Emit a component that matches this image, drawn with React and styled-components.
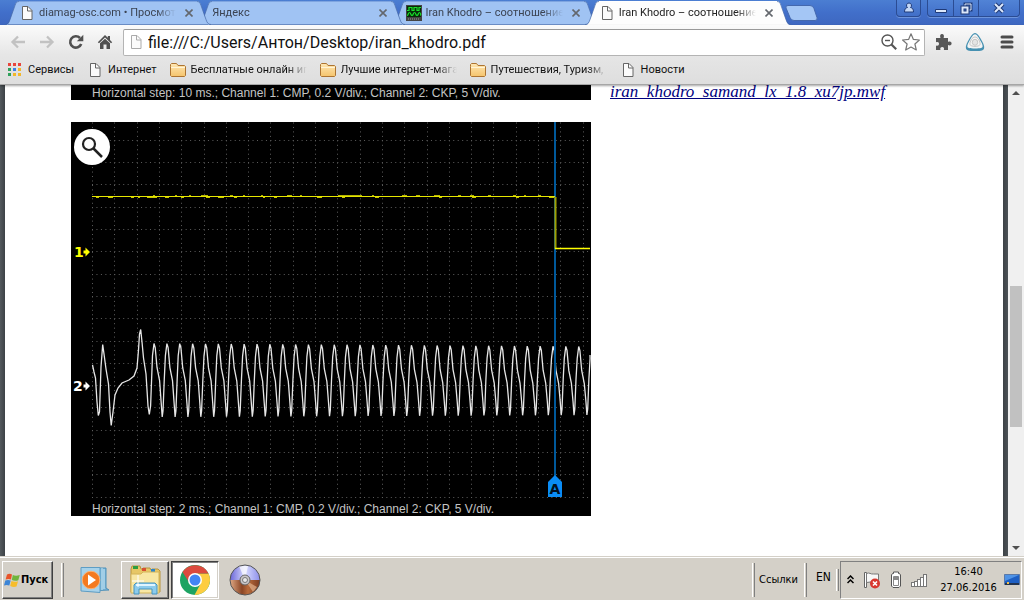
import React from 'react';
import styled, { createGlobalStyle, css } from 'styled-components';

const ui = '"DejaVu Sans Condensed", "Noto Sans", sans-serif';
const browserUi = 'Roboto, "Noto Sans", sans-serif';

const Global = createGlobalStyle`
  * { box-sizing: border-box; }
  body { margin: 0; background: #fff; font-family: ${ui}; font-size: 11px; color: #000; }
  button { font: inherit; color: inherit; padding: 0; margin: 0; border: 0; background: none; }
  svg { display: block; flex: none; }
`;

const Desktop = styled.div`
  display: flex;
  flex-direction: column;
  height: 100vh;
  overflow: hidden;
`;

/* ---------- tab strip ---------- */

const TabStrip = styled.header`
  display: flex;
  align-items: flex-start;
  height: 25px;
  padding-left: 5px;
  background: linear-gradient(#4b7ed2, #416fca 50%, #3e67c0);
  font-family: ${browserUi};
`;

const Tabs = styled.nav`
  display: flex;
  flex: 0 1 786px;
  min-width: 0;
  padding-top: 1px;
`;

const Tab = styled.div`
  position: relative;
  z-index: ${(p) => p.$z};
  display: flex;
  flex: 1 1 206px;
  min-width: 0;
  height: 24px;
  color: ${(p) => (p.$active ? '#222' : '#3b4352')};
  & + & { margin-left: -13px; }
`;

const TabFace = styled.div`
  display: flex;
  flex: 1;
  align-items: center;
  min-width: 0;
  gap: 4px;
  height: 24px;
  background: ${(p) => (p.$active ? '#fdfdfd' : '#a0c3f3')};
  border-top: 1px solid ${(p) => (p.$active ? '#fff' : '#7fa5e0')};
  border-bottom: 1px solid ${(p) => (p.$active ? '#fdfdfd' : '#6d90c9')};
`;

const TabTitle = styled.a`
  flex: 1;
  min-width: 0;
  white-space: nowrap;
  line-height: 16px;
  color: inherit;
  text-decoration: none;
  -webkit-mask-image: linear-gradient(to left, transparent, #000 20px);
  mask-image: linear-gradient(to left, transparent, #000 20px);
`;

const CloseButton = styled.button`
  display: grid;
  place-items: center;
  width: 16px;
  height: 16px;
  margin-left: 1px;
`;

const NewTab = styled.button`
  margin-top: 5px;
  margin-left: -6px;
`;

const WindowButtons = styled.div`
  display: flex;
  gap: 6px;
  margin-left: auto;
  padding-right: 4px;
`;

const ButtonGroup = styled.div`
  display: flex;
  height: 17px;
  border: 1px solid #2b4c93;
  border-top: 0;
  border-radius: 0 0 4px 4px;
  background: linear-gradient(#5183d6, #416fc8);
  box-shadow: 0 1px 0 #6c94dc;
`;

const CaptionButton = styled.button`
  display: grid;
  place-items: center;
  width: ${(p) => p.$w}px;
  & + & { border-left: 1px solid #2b4c93; }
`;

/* ---------- toolbar ---------- */

const Chrome = styled.div`
  position: relative;
  z-index: 6;
  background: linear-gradient(#fbfbfb, #e6e6e6 50%, #dedede);
  border-bottom: 1px solid #a6a6a6;
  box-shadow: 0 1px 2px rgba(0, 0, 0, 0.35);
  font-family: ${browserUi};
`;

const Toolbar = styled.div`
  display: flex;
  align-items: center;
  height: 34px;
  padding: 0 7px 0 7px;
`;

const ToolButton = styled.button`
  display: grid;
  place-items: center;
  width: ${(p) => p.$w || 29}px;
  height: 24px;
  margin-left: ${(p) => p.$gap || 0}px;
`;

const NavButtons = styled.div`
  display: flex;
  margin-left: -4px;
`;

const Omnibox = styled.form`
  display: flex;
  align-items: center;
  flex: 1;
  min-width: 0;
  gap: 4px;
  height: 27px;
  margin-left: 4px;
  padding: 0 2px 0 4px;
  background: #fff;
  border: 1px solid #b4b4b4;
  border-top-color: #999;
  border-radius: 2px;
`;

const Address = styled.input`
  flex: 1;
  min-width: 0;
  height: 25px;
  padding: 1px 0 0;
  border: 0;
  outline: 0;
  background: none;
  font: 16px/24px Roboto, "Noto Sans", sans-serif;
  color: #111;
`;

const OmniboxActions = styled.div`
  display: flex;
`;

const SmallButton = styled.button`
  display: grid;
  place-items: center;
  width: 22px;
  height: 22px;
`;

const BookmarkBar = styled.nav`
  display: flex;
  align-items: center;
  gap: 13px;
  height: 25px;
  padding: 0 7px 3px;
`;

const BookmarkLink = styled.a`
  display: flex;
  align-items: center;
  gap: 5px;
  color: #111;
  text-decoration: none;
  white-space: nowrap;
  line-height: 16px;
`;

const BookmarkLabel = styled.span`
  ${(p) =>
    p.$clip &&
    css`
      width: 116px;
      -webkit-mask-image: linear-gradient(to left, transparent, #000 20px);
      mask-image: linear-gradient(to left, transparent, #000 20px);
    `}
`;

/* ---------- document ---------- */

const Viewer = styled.main`
  display: flex;
  flex: 1;
  min-height: 0;
  background: linear-gradient(to right, #53595d, #3d4246 5px, #3d4246 calc(100% - 21px), #4c5256 calc(100% - 16px));
`;

const Sheet = styled.article`
  display: flex;
  align-items: flex-start;
  flex: 1;
  min-width: 0;
  gap: 19px;
  margin: 0 5px;
  padding-left: 66px;
  background: #fff;
  overflow: hidden;
`;

const Records = styled.div`
  display: flex;
  flex-direction: column;
  flex: none;
  gap: 22px;
`;

const Scope = styled.figure`
  position: relative;
  margin: 0;
  width: 520px;
  background: #000;
`;

const Caption = styled.figcaption`
  height: 15px;
  padding-left: 21px;
  white-space: nowrap;
  color: #c4c4c4;
  font: 12px/17px "Liberation Sans", Arial, sans-serif;
`;

const Magnify = styled.button`
  position: absolute;
  top: 7px;
  left: 3px;
  display: grid;
  place-items: center;
  width: 36px;
  height: 36px;
  border-radius: 50%;
  background: #fff;
`;

const FileLink = styled.a`
  color: #000080;
  font: italic 17px/14px "Liberation Serif", "Times New Roman", serif;
  white-space: nowrap;
`;

const Scrollbar = styled.div`
  display: flex;
  flex-direction: column;
  align-items: center;
  width: 16px;
  background: #f0f0f0;
`;

const ScrollArrow = styled.button`
  display: grid;
  place-items: center;
  width: 16px;
  height: 16px;
`;

const ScrollGap = styled.div`
  flex: ${(p) => p.$grow};
`;

const Thumb = styled.div`
  flex: 140;
  width: 12px;
  background: #c1c1c1;
`;

/* ---------- taskbar ---------- */

const Taskbar = styled.footer`
  display: flex;
  align-items: center;
  height: 44px;
  padding: 3px 2px 1px;
  background: #d4d0c8;
  border-top: 1px solid #d4d0c8;
  box-shadow: inset 0 1px 0 #fff;
`;

const raised = css`
  border: 1px solid;
  border-color: #fff #404040 #404040 #fff;
  box-shadow: inset -1px -1px 0 #808080;
`;

const StartButton = styled.button`
  ${raised}
  display: flex;
  align-items: center;
  gap: 1px;
  width: 51px;
  height: 38px;
  padding-left: 1px;
  font-size: 11px;
  font-weight: bold;
`;

const Grip = styled.div`
  width: 3px;
  height: ${(p) => p.$h || 34}px;
  margin: 0 ${(p) => p.$right || 0}px 0 ${(p) => p.$left || 0}px;
  border-left: 1px solid #fff;
  border-right: 1px solid #808080;
`;

const TaskButton = styled.button`
  display: grid;
  place-items: center;
  width: 48px;
  height: 38px;
  margin-right: 2px;
  border: 1px solid transparent;
  ${(p) => p.$open && raised}
  ${(p) =>
    p.$pressed &&
    css`
      background: #fff;
      border-color: #404040 #fff #fff #404040;
      box-shadow: inset 1px 1px 0 #808080, inset -1px -1px 0 #d4d0c8;
    `}
`;

const Right = styled.div`
  display: flex;
  align-items: center;
  margin-left: auto;
`;

const Language = styled.button`
  width: 29px;
  padding: 0 0 5px 4px;
  font-size: 12px;
`;

const Tray = styled.div`
  display: flex;
  align-items: center;
  width: 182px;
  height: 38px;
  border: 1px solid;
  border-color: #808080 #fff #fff #808080;
`;

const TrayButton = styled.button`
  display: grid;
  place-items: center;
  width: ${(p) => p.$w}px;
  height: 24px;
`;

const Clock = styled.time`
  flex: 1;
  padding-left: 2px;
  text-align: center;
  line-height: 16px;
`;

/* ---------- icons ---------- */

const DocIcon = ({ tone = '#666' }) => (
  <svg width="16" height="16" viewBox="0 0 16 16">
    <path d="M3.500 1.500h5.500l4 4v9h-9.500z" fill="#fbfbfb" stroke={tone} />
    <path d="M8.500 1.500v4.500h4.500" fill="none" stroke={tone} />
  </svg>
);

const FolderIcon = () => (
  <svg width="16" height="14" viewBox="0 0 16 14">
    <defs>
      <linearGradient id="fold" x2="0" y2="1">
        <stop stopColor="#ffe7b4" />
        <stop offset="1" stopColor="#f5c46c" />
      </linearGradient>
    </defs>
    <path d="M.5 3.500v-2l1-1h5l1.500 2h6.500l1 1v9l-1 1h-13l-1-1z" fill="url(#fold)" stroke="#ad7431" />
    <path d="M1 4.500h14" stroke="#fff4d6" />
  </svg>
);

const AppsIcon = () => {
  const colors = ['#e8453c', '#e8453c', '#e8453c', '#2fa15b', '#3b7fe8', '#f2b72b', '#2fa15b', '#f2b72b', '#f2b72b'];
  return (
    <svg width="16" height="16" viewBox="0 0 16 16">
      {colors.map((c, i) => (
        <rect key={i} x={1 + (i % 3) * 5} y={1 + Math.floor(i / 3) * 5} width="3" height="3" fill={c} />
      ))}
    </svg>
  );
};

const ScopeIcon = () => (
  <svg width="16" height="16" viewBox="0 0 16 16">
    <rect width="16" height="16" fill="#444" />
    <rect x="1" y="1" width="14" height="11" fill="#062c09" />
    <path d="M1 5.500h2v-3h3v3h2v-3h3v3h2v-3h2" fill="none" stroke="#19e02c" strokeWidth="1.200" />
    <path d="M1 10.500c1.500 0 1-3 2.500-3s1 3 2.500 3 1-3 2.500-3 1 3 2.500 3 1-3 2.500-3 1 3 1.500 3" fill="none" stroke="#19e02c" strokeWidth="1.200" />
    <path d="M2 14h12" stroke="#999" strokeDasharray="1 1" />
  </svg>
);

const CrossIcon = () => (
  <svg width="8" height="8" viewBox="0 0 8 8">
    <path d="M.5.5l7 7M7.500.5l-7 7" stroke="#63676d" strokeWidth="1.600" />
  </svg>
);

const ArrowIcon = ({ flip }) => (
  <svg width="16" height="14" viewBox="0 0 16 14" transform={flip ? 'scale(-1 1)' : undefined}>
    <path d="M8 1.500L2.500 7 8 12.500M2.500 7H15" fill="none" stroke="#c2c2c2" strokeWidth="2.300" />
  </svg>
);

const ReloadIcon = () => (
  <svg width="16" height="16" viewBox="0 0 16 16">
    <path d="M13.200 10A5.700 5.700 0 1 1 12 4" fill="none" stroke="#505050" strokeWidth="2.600" />
    <path d="M15.300.8v6.400H8.800z" fill="#505050" />
  </svg>
);

const HomeIcon = () => (
  <svg width="16" height="16" viewBox="0 0 16 16">
    <path d="M8 1L.8 8.200l1.200 1L8 3.500l6 5.700 1.200-1L13 6V2h-2.200v1.800z" fill="#505050" />
    <path d="M3 9.300L8 4.800l5 4.500V15H9.500v-4.500h-3V15H3z" fill="#505050" />
  </svg>
);

const ZoomOutIcon = () => (
  <svg width="16" height="16" viewBox="0 0 16 16">
    <circle cx="6.500" cy="6.500" r="5.500" fill="none" stroke="#555" strokeWidth="1.400" />
    <path d="M4 6.500h5" stroke="#555" strokeWidth="1.400" />
    <path d="M10.500 10.500l4.700 4.700" stroke="#555" strokeWidth="2.200" />
  </svg>
);

const StarIcon = () => (
  <svg width="18" height="18" viewBox="0 0 18 18">
    <path d="M9 .8l2.400 5.600 6 .6-4.500 4 1.400 6L9 14l-5.300 3 1.400-6L.6 7l6-.6z" fill="#fff" stroke="#777" strokeWidth="1.200" strokeLinejoin="round" />
  </svg>
);

const PuzzleIcon = () => (
  <svg width="18" height="18" viewBox="0 0 18 18">
    <path d="M2 5h4.500C5.500 2.500 6.500 1 8 1s2.600 1.500 1.600 4H14v4c2.200-1 3.600 0 3.600 1.500S16.200 13 14 12v5H9.800c.8-2-.3-3-1.600-3s-2.500 1-1.700 3H2v-4.500c2 .8 3-.3 3-1.700S4 8.500 2 9.300z" fill="#575757" />
  </svg>
);

const DriveIcon = () => (
  <svg width="20" height="20" viewBox="0 0 20 20">
    <path d="M10 1c2.500 0 4.500 3.500 7.500 9 2.500 5 2 7.500-.5 8.500-2 .7-12 .7-14 0C.5 17.500 0 15 2.500 10 5.500 4.500 7.500 1 10 1z" fill="#4590b1" />
    <path d="M10 2.200c2 0 3.600 3 6.300 8 2 4 1.700 5.200-.3 5.800-2 .6-10 .6-12 0-2-.6-2.300-1.800-.3-5.800 2.700-5 4.300-8 6.300-8z" fill="#f4f4f4" />
    <path d="M10 5c3 0 5.500 5 5 7.500-.5 2.500-9.500 2.500-10 0C4.500 10 7 5 10 5z" fill="none" stroke="#c6c6c6" />
    <ellipse cx="10" cy="10.300" rx="2.700" ry="3" fill="#e4e4e4" stroke="#c6c6c6" />
  </svg>
);

const MenuIcon = () => (
  <svg width="14" height="14" viewBox="0 0 14 14">
    <path d="M2 2h10M2 7h10M2 12h10" stroke="#4c4c4c" strokeWidth="3" strokeLinecap="round" />
  </svg>
);

const PlayerIcon = () => (
  <svg width="30" height="28" viewBox="0 0 30 28">
    <path d="M8 2h18v20l3 2-21 1z" fill="#7bb6d8" stroke="#4f91b9" />
    <path d="M22 2v22M24 3v20" stroke="#c9e6f5" />
    <path d="M1 1.500h19v25L1 25z" fill="#a7d2ea" stroke="#5e9dc4" />
    <circle cx="11" cy="14" r="8.800" fill="#f47a20" stroke="#fbb273" />
    <path d="M8 8.500l8 5.500-8 5.500z" fill="#fff" />
  </svg>
);

const ExplorerIcon = () => (
  <svg width="32" height="32" viewBox="0 0 32 32">
    <path d="M2 28V5l1-3h8l1 3h1l1-1h7l1 2 1-1h6l2 2v21z" fill="#e7c766" stroke="#b8943c" />
    <path d="M4 2h5v3H4z" fill="#2c9e3e" />
    <path d="M13 4h4v3h-4z" fill="#d85032" />
    <path d="M22 5h4v3h-4z" fill="#2d86c9" />
    <path d="M2 10h10l2-2h16v21H2z" fill="#f8e7a4" stroke="#d3b45a" />
    <path d="M5 30v-9l2-2h19l2 2v9h-5v-5H10v5z" fill="#8ccbec" stroke="#4694c0" />
    <path d="M7 21h19" stroke="#dff4ff" strokeWidth="2" />
    <path d="M9 11v12M3 17h12" stroke="#fff" />
  </svg>
);

const ChromeIcon = () => (
  <svg width="32" height="32" viewBox="0 0 32 32">
    <circle cx="16" cy="16" r="15" fill="#1da362" />
    <path d="M16 9.500h13.500A15 15 0 0 1 15.500 31l6.200-11.500z" fill="#fdcd41" />
    <path d="M3.500 8A15 15 0 0 1 29.500 9.500H16l-6.200 8.500z" fill="#dc4a3e" />
    <circle cx="16" cy="16" r="7" fill="#fff" />
    <circle cx="16" cy="16" r="5.500" fill="#4285f4" />
  </svg>
);

const DiscIcon = () => (
  <svg width="32" height="32" viewBox="0 0 32 32">
    <defs>
      <linearGradient id="sky" x2="1" y2="0">
        <stop stopColor="#6a66d8" />
        <stop offset=".5" stopColor="#d9dcff" />
        <stop offset="1" stopColor="#8c8eea" />
      </linearGradient>
      <linearGradient id="earth" x2="1" y2="0">
        <stop stopColor="#e0a985" />
        <stop offset=".4" stopColor="#8a4524" />
        <stop offset=".6" stopColor="#b86a3a" />
        <stop offset="1" stopColor="#7a3c22" />
      </linearGradient>
    </defs>
    <path d="M1 16a15 15 0 0 1 30 0z" fill="url(#sky)" />
    <path d="M1 16a15 15 0 0 0 30 0z" fill="url(#earth)" />
    <path d="M16 16L10 2h9z" fill="#fff" opacity=".7" />
    <path d="M16 16l12 7-4 5z" fill="#e2b38e" opacity=".7" />
    <circle cx="16" cy="16" r="15" fill="none" stroke="#555" />
    <circle cx="16" cy="16" r="5" fill="#c9c6c8" stroke="#666" />
    <circle cx="16" cy="16" r="2.500" fill="#e8e8e8" stroke="#777" />
  </svg>
);

const WindowsIcon = () => (
  <svg width="16" height="16" viewBox="0 0 16 16">
    <path d="M3 2.500Q5.500 1 8 2.500L7 7.500Q4.500 6.300 1.600 7.500z" fill="#e8542a" />
    <path d="M8.800 3Q11.800 4.500 15.800 3L14.300 8.200Q11 9.500 7.800 8z" fill="#6fb53c" />
    <path d="M1.300 8.500Q4 7.300 6.700 8.500L5.300 13.500Q2.500 12.500 0 13.500z" fill="#3d85d6" />
    <path d="M7.500 9Q10.500 10.500 14 9.300L12.500 14.500Q9.500 15.700 6.200 14z" fill="#f7bd2c" />
  </svg>
);

const FlagIcon = () => (
  <svg width="18" height="18" viewBox="0 0 18 18">
    <path d="M1.500 1.500h2v15h-2z" fill="#fff" stroke="#666" />
    <path d="M3.500 2.500c3-1.500 4 1 7 .5h5v8c-4 1.500-6-1-12 .5z" fill="#f7f7f7" stroke="#777" />
    <circle cx="12" cy="12.500" r="5" fill="#d8372e" />
    <path d="M10 10.500l4 4M14 10.500l-4 4" stroke="#fff" strokeWidth="1.600" />
  </svg>
);

const BatteryIcon = () => (
  <svg width="12" height="18" viewBox="0 0 12 18">
    <path d="M3.500 1h5v1.500h1l1 1.500v11l-1.500 1.500h-6L1.500 15V4l1-1.500h1z" fill="#fff" stroke="#555" />
    <path d="M3.500 5.500h5v9h-5z" fill="#fff" stroke="#888" />
    <path d="M4 5.500h4V9H4z" fill="#8a8a8a" />
  </svg>
);

const SignalIcon = () => (
  <svg width="17" height="14" viewBox="0 0 17 14">
    {[3, 4, 6, 8, 11].map((h, i) => (
      <rect key={h} x={i * 3 + 0.5} y={13.5 - h - 1} width="3" height={h + 1} fill="#fff" stroke="#777" />
    ))}
  </svg>
);

const MonitorIcon = () => (
  <svg width="16" height="14" viewBox="0 0 16 14">
    <path d="M.5 1.500h15v10H.5z" fill="#1d5fc4" stroke="#5a79a8" />
    <path d="M1 2h14L1 8z" fill="#4f93e6" />
    <path d="M1 10h14v2H1z" fill="#23344f" />
    <path d="M3 9h2v2H3z" fill="#f2c14a" />
  </svg>
);

const Triangle = ({ down }) => (
  <svg width="8" height="4" viewBox="0 0 8 4">
    <path d={down ? 'M0 0h8L4 4z' : 'M0 4h8L4 0z'} fill="#505050" />
  </svg>
);

const TabEdge = ({ right, active }) => {
  const fill = active ? '#fdfdfd' : '#a0c3f3';
  return (
    <svg width="14" height="24" viewBox="0 0 14 24" transform={right ? 'scale(-1 1)' : undefined}>
      <path d="M0 24c3 0 4-2 5-5l5-15c1-3 2-4 4-4v24z" fill={fill} />
      <path d="M0 23.500c3 0 4-2 5-5l5-14c1-3 2-4 4-4" fill="none" stroke="#4669a8" opacity=".7" />
      {!active && <path d="M3 23.500h11" stroke="#6d90c9" />}
    </svg>
  );
};

/* ---------- oscillogram ---------- */

const STEP = 22.3;
const PERIOD = 12.87;

function crankPath() {
  const pts = [
    [21.5, 243], [23, 250], [24.5, 256], [26, 280], [27.3, 293.5], [28.5, 290], [30, 245], [31.7, 222.5], [33, 232],
    [35, 247], [37.5, 262], [39, 290], [40.2, 303.5], [42, 290], [44, 273], [47, 266], [51, 261], [58, 258], [63, 254],
    [66, 246], [67.5, 228], [68.5, 212], [69.7, 207.5], [71, 220], [72.5, 236], [75, 252], [77, 284], [78.3, 292.5], [79.6, 284],
  ];
  for (let i = 0; i < 35; i += 1) {
    const x = 83 + i * PERIOD;
    const top = 221.5 + i * 0.09;
    const low = 295 - i * 0.06;
    pts.push([x - 1.5, top + 12], [x, top], [x + 1.2, top + 4], [x + 3, top + 24], [x + 5.6, top + 37], [x + 7.2, low - 14], [x + 8.2, low], [x + 9, low - 6], [x + 10.2, low - 36]);
  }
  return pts.filter(([x]) => x <= 519.5).map(([x, y], i) => `${i ? 'L' : 'M'}${x.toFixed(1)} ${y.toFixed(1)}`).join('') + 'L519 233';
}

const Oscillogram = () => (
  <svg width="520" height="379" viewBox="0 0 520 379">
    <g stroke="#5e5e5e" strokeDasharray="1 3.46">
      {Array.from({ length: 23 }, (_, i) => (
        <path key={i} d={`M${Math.floor(21.5 + i * STEP) + 0.5} .5V376`} />
      ))}
      {Array.from({ length: 17 }, (_, i) => (
        <path key={i} d={`M21 ${Math.floor(18.3 + i * STEP) + 0.5}H520`} />
      ))}
    </g>
    <path d={crankPath()} fill="none" stroke="#e6e6e6" strokeWidth="1.300" />
    <path d="M484 0V356" stroke="#00599b" strokeWidth="2" />
    <path d="M21 74.500H484" stroke="#e6e600" />
    <path
      d="M25 75.500h3m9 0h5m18 0h3m4 0h2m7 0h10m8 0h4m12 0h3m22 0h4m8 0h6m10 0h3m26 0h2m9 0h3m40 0h5m20 0h3m30 0h4m60 0h3m30 0h4m40 0h3m30 0h5"
      stroke="#c9c900"
    />
    <path
      d="M82 73.500h2m20 0h2m12 0h2m10 0h7m22 0h3m10 0h2m16 0h2m24 0h5m8 0h2m36 0h24m10 0h2m28 0h5m9 0h4m14 0h6m18 0h3m9 0h4m14 0h3m22 0h3m8 0h2m12 0h3"
      stroke="#b5b500"
    />
    <path d="M484.500 75v52" stroke="#a0a000" strokeWidth="2" />
    <path d="M484 126.500h35" stroke="#ff0" strokeWidth="1.400" />
    <path d="M12.500 128.500h2v-3l4.500 4.500-4.500 4.500v-3h-2z" fill="#ff0" />
    <path d="M12.500 262.500h2v-3l4.500 4.500-4.500 4.500v-3h-2z" fill="#fff" />
    <path d="M477 375v-15l7-7 7 7v15z" fill="#0a8cf5" />
    <g fontFamily="DejaVu Sans, Liberation Sans, sans-serif" fontWeight="bold" fontSize="14">
      <text x="3" y="135" fill="#ff0">1</text>
      <text x="2" y="269" fill="#fff">2</text>
      <text x="484" y="372" fill="#001020" textAnchor="middle">A</text>
    </g>
  </svg>
);

/* ---------- page ---------- */

const tabs = [
  { title: 'diamag-osc.com • Просмотр', icon: <DocIcon /> },
  { title: 'Яндекс' },
  { title: 'Iran Khodro – соотношение', icon: <ScopeIcon /> },
  { title: 'Iran Khodro – соотношение', icon: <DocIcon />, active: true },
];

const bookmarks = [
  { label: 'Сервисы', icon: <AppsIcon /> },
  { label: 'Интернет', icon: <DocIcon /> },
  { label: 'Бесплатные онлайн игр', icon: <FolderIcon />, clip: true },
  { label: 'Лучшие интернет-мага', icon: <FolderIcon />, clip: true },
  { label: 'Путешествия, Туризм,', icon: <FolderIcon />, clip: true },
  { label: 'Новости', icon: <DocIcon /> },
];

export default function App() {
  return (
    <Desktop>
      <Global />
      <TabStrip>
        <Tabs>
          {tabs.map((t, i) => (
            <Tab key={i} $active={t.active} $z={t.active ? 5 : 4 - i}>
              <TabEdge active={t.active} />
              <TabFace $active={t.active}>
                {t.icon}
                <TabTitle href="#">{t.title}</TabTitle>
                <CloseButton aria-label="Закрыть вкладку"><CrossIcon /></CloseButton>
              </TabFace>
              <TabEdge right active={t.active} />
            </Tab>
          ))}
        </Tabs>
        <NewTab aria-label="Новая вкладка">
          <svg width="33" height="16" viewBox="0 0 33 16">
            <path d="M3 .5h22q3 0 4 3l3 9q1 3-2 3H9q-3 0-4-3L1 3Q0 .5 3 .5z" fill="#a4c6f5" stroke="#4468ad" />
          </svg>
        </NewTab>
        <WindowButtons>
          <ButtonGroup>
            <CaptionButton $w={23} aria-label="Пользователь">
              <svg width="12" height="12" viewBox="0 0 12 12">
                <path d="M6 1a2.500 2.500 0 0 1 1.500 4.500c2 .5 3 1.500 3 4.500h-9c0-3 1-4 3-4.500A2.500 2.500 0 0 1 6 1z" fill="#c5d8f6" stroke="#1f3a78" />
              </svg>
            </CaptionButton>
          </ButtonGroup>
          <ButtonGroup>
            <CaptionButton $w={25} aria-label="Свернуть">
              <svg width="12" height="12" viewBox="0 0 12 12"><path d="M.5 7.500h11v3H.5z" fill="#dce8fb" stroke="#1f3a78" /></svg>
            </CaptionButton>
            <CaptionButton $w={25} aria-label="Восстановить">
              <svg width="13" height="13" viewBox="0 0 13 13">
                <path d="M5 4V2h6v6H9" fill="none" stroke="#1f3a78" strokeWidth="3" />
                <path d="M5 4V2h6v6H9" fill="none" stroke="#dce8fb" />
                <path d="M2.500 5.500h5v5h-5z" fill="none" stroke="#1f3a78" strokeWidth="4" />
                <path d="M2.500 5.500h5v5h-5z" fill="none" stroke="#dce8fb" strokeWidth="2" />
              </svg>
            </CaptionButton>
            <CaptionButton $w={41} aria-label="Закрыть">
              <svg width="12" height="12" viewBox="0 0 12 12">
                <path d="M2 2l8 8M10 2l-8 8" stroke="#1f3a78" strokeWidth="4" />
                <path d="M2 2l8 8M10 2l-8 8" stroke="#dce8fb" strokeWidth="2" />
              </svg>
            </CaptionButton>
          </ButtonGroup>
        </WindowButtons>
      </TabStrip>

      <Chrome>
        <Toolbar>
          <NavButtons>
            <ToolButton aria-label="Назад"><ArrowIcon /></ToolButton>
            <ToolButton aria-label="Вперёд"><ArrowIcon flip /></ToolButton>
            <ToolButton aria-label="Обновить"><ReloadIcon /></ToolButton>
            <ToolButton aria-label="Главная"><HomeIcon /></ToolButton>
          </NavButtons>
          <Omnibox>
            <DocIcon tone="#aaa" />
            <Address aria-label="Адрес" defaultValue="file:///C:/Users/Антон/Desktop/iran_khodro.pdf" />
            <OmniboxActions>
              <SmallButton type="button" aria-label="Масштаб"><ZoomOutIcon /></SmallButton>
              <SmallButton type="button" aria-label="В закладки"><StarIcon /></SmallButton>
            </OmniboxActions>
          </Omnibox>
          <ToolButton $w={18} $gap={9} aria-label="Расширения"><PuzzleIcon /></ToolButton>
          <ToolButton $w={20} $gap={13} aria-label="Диск"><DriveIcon /></ToolButton>
          <ToolButton $w={20} $gap={12} aria-label="Меню"><MenuIcon /></ToolButton>
        </Toolbar>
        <BookmarkBar>
          {bookmarks.map((b) => (
            <BookmarkLink key={b.label} href="#">
              {b.icon}
              <BookmarkLabel $clip={b.clip}>{b.label}</BookmarkLabel>
            </BookmarkLink>
          ))}
        </BookmarkBar>
      </Chrome>

      <Viewer>
        <Sheet>
          <Records>
            <Scope>
              <Caption>Horizontal step: 10 ms.; Channel 1: CMP, 0.2 V/div.; Channel 2: CKP, 5 V/div.</Caption>
            </Scope>
            <Scope>
              <Oscillogram />
              <Magnify aria-label="Увеличить">
                <svg width="24" height="24" viewBox="0 0 24 24">
                  <circle cx="9" cy="9" r="6" fill="none" stroke="#222" strokeWidth="2.200" />
                  <path d="M13.500 13.500l8.500 8.500" stroke="#222" strokeWidth="2.500" />
                </svg>
              </Magnify>
              <Caption>Horizontal step: 2 ms.; Channel 1: CMP, 0.2 V/div.; Channel 2: CKP, 5 V/div.</Caption>
            </Scope>
          </Records>
          <FileLink href="#">iran_khodro_samand_lx_1.8_xu7jp.mwf</FileLink>
        </Sheet>
        <Scrollbar>
          <ScrollArrow aria-label="Вверх"><Triangle /></ScrollArrow>
          <ScrollGap $grow={185} />
          <Thumb />
          <ScrollGap $grow={113} />
          <ScrollArrow aria-label="Вниз"><Triangle down /></ScrollArrow>
        </Scrollbar>
      </Viewer>

      <Taskbar>
        <StartButton><WindowsIcon />Пуск</StartButton>
        <Grip $left={8} $right={7} />
        <TaskButton aria-label="Проигрыватель"><PlayerIcon /></TaskButton>
        <TaskButton $open aria-label="Проводник"><ExplorerIcon /></TaskButton>
        <TaskButton $pressed aria-label="Chrome"><ChromeIcon /></TaskButton>
        <TaskButton aria-label="Диск"><DiscIcon /></TaskButton>
        <Right>
          <Grip $right={4} />
          <span>Ссылки</span>
          <Grip $left={6} />
          <Language>EN</Language>
          <Grip $h={22} $right={1} />
          <Tray>
            <TrayButton $w={18} aria-label="Скрытые значки">
              <svg width="7" height="9" viewBox="0 0 7 9">
                <path d="M.5 4L3.500 1l3 3M.5 8L3.500 5l3 3" fill="none" stroke="#000" strokeWidth="1.500" />
              </svg>
            </TrayButton>
            <TrayButton $w={25} aria-label="Центр поддержки"><FlagIcon /></TrayButton>
            <TrayButton $w={23} aria-label="Батарея"><BatteryIcon /></TrayButton>
            <TrayButton $w={25} aria-label="Сеть"><SignalIcon /></TrayButton>
            <Clock>16:40<br />27.06.2016</Clock>
            <TrayButton $w={18} aria-label="Показать рабочий стол"><MonitorIcon /></TrayButton>
          </Tray>
        </Right>
      </Taskbar>
    </Desktop>
  );
}
